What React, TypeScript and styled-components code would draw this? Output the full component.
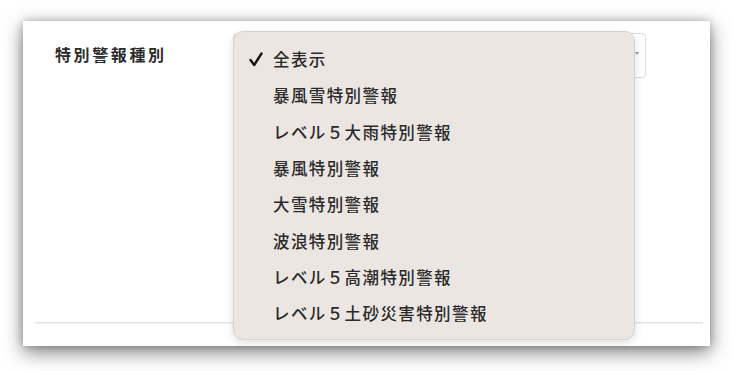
import React from "react";
import styled, { createGlobalStyle } from "styled-components";

const Global = createGlobalStyle`
  html, body { margin: 0; padding: 0; background: #ffffff; }
  body { font-family: "Noto Sans CJK JP", "Noto Sans", sans-serif; }
`;

const Stage = styled.div`
  width: 733px;
  height: 371px;
  padding: 21px 23px 0 23px;
  box-sizing: border-box;
`;

const Card = styled.div`
  position: relative;
  width: 687px;
  height: 325px;
  background: #ffffff;
  box-shadow: 0 6px 18px rgba(0, 0, 0, 0.5), 0 0 8px rgba(0, 0, 0, 0.2);
  display: flex;
  flex-direction: column;
  padding: 12px 7px 0 12px;
  box-sizing: border-box;
`;

const Row = styled.div`
  display: flex;
  align-items: flex-start;
  height: 289px;
`;

const Label = styled.div`
  width: 198px;
  box-sizing: border-box;
  padding: 10px 0 0 20px;
  font-size: 16px;
  font-weight: 700;
  letter-spacing: 2.6px;
  color: #2b2b2b;
  line-height: 22px;
`;

const Field = styled.div`
  position: relative;
  width: 413px;
  height: 45px;
  box-sizing: border-box;
  border: 1px solid #dcdcdc;
  border-radius: 4px;
  background: #ffffff;
`;

const Arrow = styled.span`
  position: absolute;
  right: 6px;
  top: 18px;
  width: 0;
  height: 0;
  border-left: 2px solid transparent;
  border-right: 2px solid transparent;
  border-top: 3px solid #9a9a9a;
`;

const Divider = styled.div`
  height: 1px;
  background: #e4e4e4;
  box-shadow: 0 1px 0 #f0f0f0;
`;

const Menu = styled.ul`
  position: absolute;
  left: 210px;
  top: 10px;
  width: 402px;
  margin: 0;
  padding: 9px 0 8px 0;
  list-style: none;
  box-sizing: border-box;
  background: #ece6e3;
  border: 1px solid #d6d2d0;
  border-radius: 10px;
  box-shadow: 0 3px 10px rgba(0, 0, 0, 0.12);
`;

const Item = styled.li`
  display: flex;
  align-items: center;
  height: 36.3px;
  padding-left: 15px;
  font-size: 16.5px;
  font-weight: 500;
  letter-spacing: 1.4px;
  color: #2a2a2a;
`;

const Check = styled.span`
  width: 24px;
  display: inline-flex;
  align-items: center;
`;

const items = [
  "全表示",
  "暴風雪特別警報",
  "レベル５大雨特別警報",
  "暴風特別警報",
  "大雪特別警報",
  "波浪特別警報",
  "レベル５高潮特別警報",
  "レベル５土砂災害特別警報",
];

export default function App() {
  return (
    <>
      <Global />
      <Stage>
        <Card>
          <Row>
            <Label>特別警報種別</Label>
            <Field>
              <Arrow />
            </Field>
          </Row>
          <Divider />
          <Menu>
            {items.map((t, i) => (
              <Item key={t}>
                <Check>
                  {i === 0 && (
                    <svg width="14" height="15" viewBox="0 0 14 15">
                      <path
                        d="M1.5 8 L5.2 13 L12.5 1.5"
                        fill="none"
                        stroke="#161616"
                        strokeWidth="2.4"
                        strokeLinecap="round"
                        strokeLinejoin="round"
                      />
                    </svg>
                  )}
                </Check>
                {t}
              </Item>
            ))}
          </Menu>
        </Card>
      </Stage>
    </>
  );
}
